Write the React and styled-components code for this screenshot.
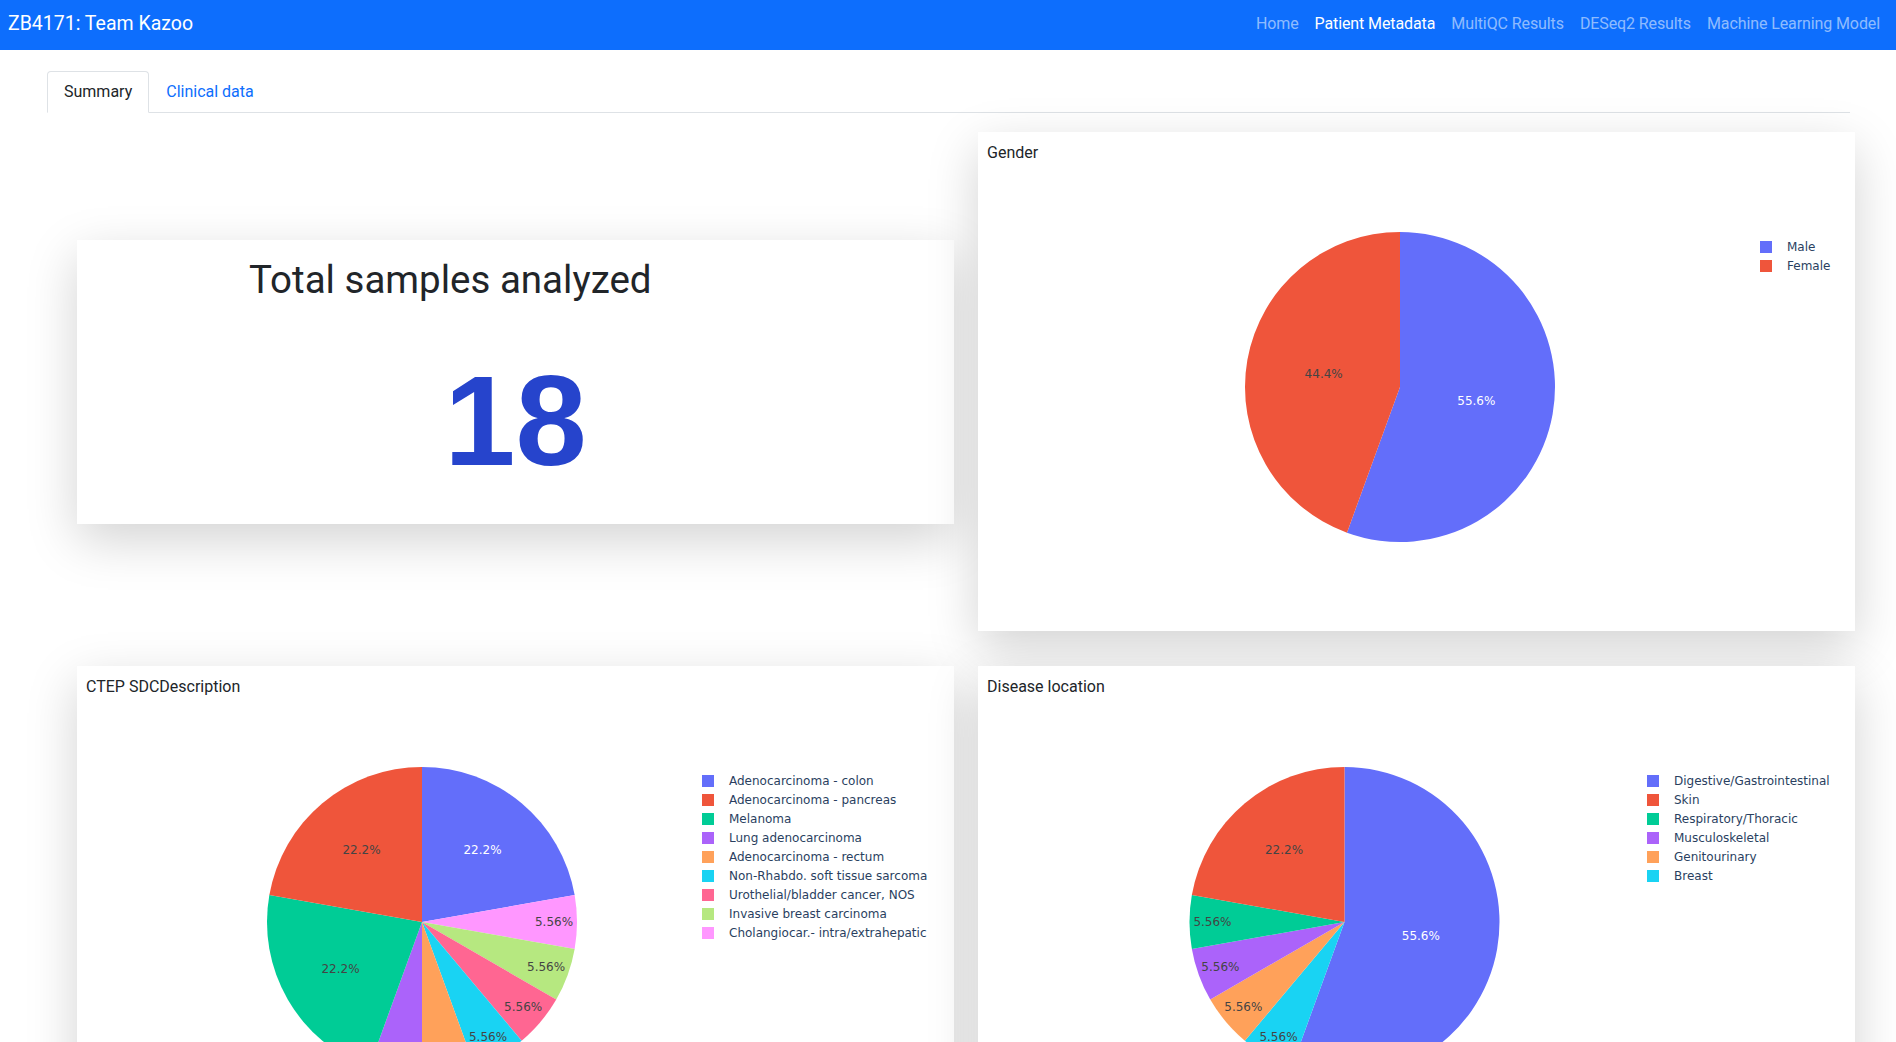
import React from "react";
import styled, { createGlobalStyle } from "styled-components";

const GlobalStyle = createGlobalStyle`
  html, body { margin: 0; padding: 0; overflow: hidden; background: #fff; }
  body {
    font-family: "Segoe UI", Roboto, "Liberation Sans", sans-serif;
    color: #212529;
    -webkit-font-smoothing: antialiased;
  }
  * { box-sizing: border-box; }
`;

const PALETTE = ["#636efa", "#EF553B", "#00cc96", "#ab63fa", "#FFA15A", "#19d3f3", "#FF6692", "#B6E880", "#FF97FF"];

const Navbar = styled.nav`
  height: 50px;
  background: #0d6efd;
  display: flex;
  align-items: center;
  justify-content: space-between;
  padding: 0 16px 2px 8px;
`;

const Brand = styled.a`
  font-size: 19.5px;
  line-height: 30px;
  color: #fff;
  text-decoration: none;
`;

const NavList = styled.div`
  display: flex;
  align-items: center;
`;

const NavLink = styled.a`
  font-size: 16px;
  line-height: 24px;
  padding: 8px 8px;
  letter-spacing: -0.1px;
  color: ${(p) => (p.$active ? "#fff" : "rgba(255,255,255,0.55)")};
  text-decoration: none;
  &:last-child { padding-right: 0; }
`;

const Main = styled.main`
  padding-top: 21px;
`;

const TabBar = styled.div`
  margin: 0 46px 0 47px;
  display: flex;
  border-bottom: 1px solid #dee2e6;
`;

const Tab = styled.a`
  font-size: 16px;
  line-height: 24px;
  padding: 8px 16px;
  margin-bottom: -1px;
  border: 1px solid ${(p) => (p.$active ? "#dee2e6" : "transparent")};
  border-bottom-color: ${(p) => (p.$active ? "#fff" : "transparent")};
  border-radius: 4px 4px 0 0;
  background: ${(p) => (p.$active ? "#fff" : "transparent")};
  color: ${(p) => (p.$active ? "#212529" : "#0d6efd")};
  text-decoration: none;
`;

const Grid = styled.div`
  display: grid;
  grid-template-columns: 1fr 1fr;
  column-gap: 24px;
  row-gap: 35px;
  align-items: center;
  padding: 19px 41px 0 77px;
`;

const Card = styled.section`
  background: #fff;
  box-shadow: 0 16px 48px rgba(0, 0, 0, 0.175);
`;

const StatCard = styled(Card)`
  padding: 16px;
`;

const StatTitle = styled.h1`
  margin: 0 0 40px;
  padding-left: 156px;
  font-size: 38.5px;
  font-weight: 400;
  line-height: 48px;
  color: #212529;
`;

const StatNumber = styled.div`
  margin-bottom: 10px;
  text-align: center;
  font-family: "Liberation Sans", Arial, sans-serif;
  font-weight: 700;
  font-size: 128px;
  line-height: 154px;
  color: #2644cc;
`;

const ChartCard = styled(Card)`
  height: 499px;
  display: flex;
  flex-direction: column;
`;

const ChartTitle = styled.h6`
  margin: 0;
  padding: 9px 9px 0;
  font-size: 16px;
  font-weight: 400;
  line-height: 24px;
  color: #212529;
`;

const ChartSvg = styled.svg`
  display: block;
  flex: 1;
  width: 100%;
  font-family: "DejaVu Sans", Verdana, sans-serif;
`;

function polar(cx, cy, r, deg) {
  const a = (deg * Math.PI) / 180;
  return [cx + r * Math.sin(a), cy - r * Math.cos(a)];
}

function PieChart({ data, cx, cy, r = 155, legendX }) {
  const total = data.reduce((s, d) => s + d.value, 0);
  const withColor = data.map((d, i) => ({ ...d, color: PALETTE[i] }));
  const order = [withColor[0], ...withColor.slice(1).reverse()];
  let start = 0;
  const slices = order.map((d) => {
    const frac = d.value / total;
    const span = frac * 360;
    const s = start;
    const e = start + span;
    start = e;
    const [x1, y1] = polar(cx, cy, r, s);
    const [x2, y2] = polar(cx, cy, r, e);
    const path = `M${cx},${cy} L${x1},${y1} A${r},${r} 0 ${span > 180 ? 1 : 0} 1 ${x2},${y2} Z`;
    const k = frac >= 0.4 ? 0.5 : frac >= 0.2 ? 0.607 : 0.852;
    const [lx, ly] = polar(cx, cy, r * k, s + span / 2);
    const pct = ((frac * 100).toPrecision(3)) + "%";
    return { ...d, path, lx, ly, pct };
  });
  return (
    <ChartSvg viewBox="0 0 877 466" preserveAspectRatio="xMinYMin meet">
      {slices.map((s) => (
        <path key={s.label} d={s.path} fill={s.color} />
      ))}
      {slices.map((s) => (
        <text
          key={s.label + "-t"}
          x={s.lx}
          y={s.ly + 4.3}
          textAnchor="middle"
          fontSize="12"
          fill={s.color === "#636efa" ? "#fff" : "#444"}
        >
          {s.pct}
        </text>
      ))}
      {withColor.map((d, i) => {
        const yc = 82 + i * 19;
        return (
          <g key={d.label + "-l"}>
            <rect x={legendX} y={yc - 6} width="12" height="12" fill={d.color} />
            <text x={legendX + 27} y={yc + 4.3} fontSize="12" fill="#2a3f5f">
              {d.label}
            </text>
          </g>
        );
      })}
    </ChartSvg>
  );
}

const gender = [
  { label: "Male", value: 10 },
  { label: "Female", value: 8 },
];

const ctep = [
  { label: "Adenocarcinoma - colon", value: 4 },
  { label: "Adenocarcinoma - pancreas", value: 4 },
  { label: "Melanoma", value: 4 },
  { label: "Lung adenocarcinoma", value: 1 },
  { label: "Adenocarcinoma - rectum", value: 1 },
  { label: "Non-Rhabdo. soft tissue sarcoma", value: 1 },
  { label: "Urothelial/bladder cancer, NOS", value: 1 },
  { label: "Invasive breast carcinoma", value: 1 },
  { label: "Cholangiocar.- intra/extrahepatic", value: 1 },
];

const disease = [
  { label: "Digestive/Gastrointestinal", value: 10 },
  { label: "Skin", value: 4 },
  { label: "Respiratory/Thoracic", value: 1 },
  { label: "Musculoskeletal", value: 1 },
  { label: "Genitourinary", value: 1 },
  { label: "Breast", value: 1 },
];

export default function App() {
  return (
    <>
      <GlobalStyle />
      <Navbar>
        <Brand href="#">ZB4171: Team Kazoo</Brand>
        <NavList>
          <NavLink href="#">Home</NavLink>
          <NavLink href="#" $active>Patient Metadata</NavLink>
          <NavLink href="#">MultiQC Results</NavLink>
          <NavLink href="#">DESeq2 Results</NavLink>
          <NavLink href="#">Machine Learning Model</NavLink>
        </NavList>
      </Navbar>
      <Main>
        <TabBar>
          <Tab href="#" $active>Summary</Tab>
          <Tab href="#">Clinical data</Tab>
        </TabBar>
        <Grid>
          <StatCard>
            <StatTitle>Total samples analyzed</StatTitle>
            <StatNumber>18</StatNumber>
          </StatCard>
          <ChartCard>
            <ChartTitle>Gender</ChartTitle>
            <PieChart data={gender} cx={422} cy={222} legendX={782} />
          </ChartCard>
          <ChartCard>
            <ChartTitle>CTEP SDCDescription</ChartTitle>
            <PieChart data={ctep} cx={345} cy={223} legendX={625} />
          </ChartCard>
          <ChartCard>
            <ChartTitle>Disease location</ChartTitle>
            <PieChart data={disease} cx={366.5} cy={223} legendX={669} />
          </ChartCard>
        </Grid>
      </Main>
    </>
  );
}
